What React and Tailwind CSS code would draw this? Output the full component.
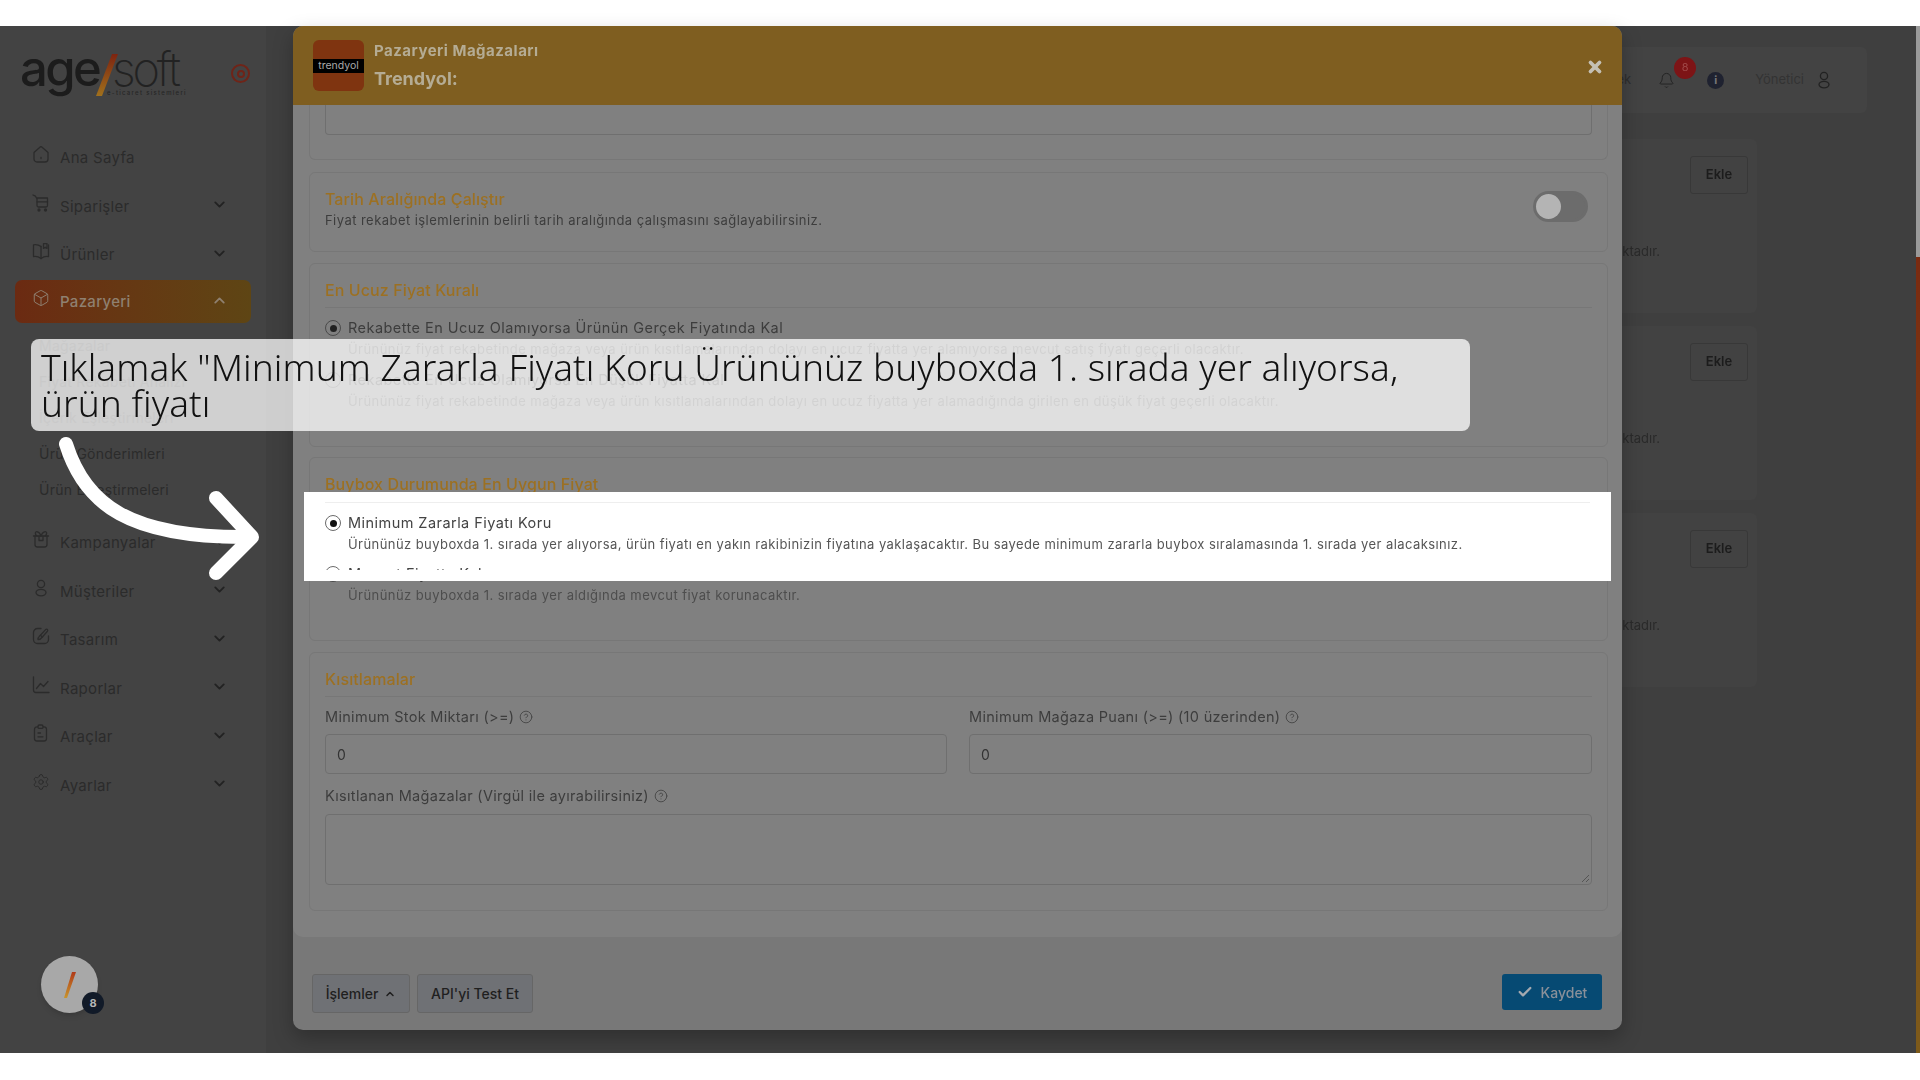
import React from 'react'
import { Box, Settings, ChevronDown, ChevronUp, Bell, X, Check, CircleHelp } from 'lucide-react'

const font = { fontFamily: 'Inter, "Noto Sans", sans-serif' }

function Glyph({ size = 18, strokeWidth = 1.3, className = '', children }) {
  return (
    <svg width={size} height={size} viewBox="0 0 18 18" fill="none" stroke="currentColor" strokeWidth={strokeWidth} strokeLinecap="round" strokeLinejoin="round" className={className}>
      {children}
    </svg>
  )
}

const HomeIcon = (p) => (
  <Glyph {...p}>
    <path d="M2 7.6 L7.6 2.4 a2 2 0 0 1 2.8 0 L16 7.6 V14 a3 3 0 0 1 -3 3 H5 a3 3 0 0 1 -3 -3 Z" />
    <path d="M9 12.5 V13.5" />
  </Glyph>
)
const CartIcon = (p) => (
  <Glyph {...p}>
    <path d="M1 1 L3.5 2.2 L5 5 V11.5 a1.5 1.5 0 0 0 1.5 1.5 H14 a1.5 1.5 0 0 0 1.5 -1.5 V4 H5" />
    <path d="M5.2 7.8 H15.5" />
    <circle cx="7" cy="16" r="1" fill="currentColor" />
    <circle cx="13.5" cy="16" r="1" fill="currentColor" />
  </Glyph>
)
const BookIcon = (p) => (
  <Glyph {...p}>
    <path d="M9 4.5 C7 3 4 2.4 1.5 2.8 V14.6 C4 14.2 7 15 9 16.6 C11 15 14 14.2 16.5 14.6 V2.8" />
    <path d="M9 4.5 V16.6" />
    <path d="M11.5 4 V1.6 H15 V6.4 L13.2 5.2 L11.5 6.4 Z" />
  </Glyph>
)
const GiftIcon = (p) => (
  <Glyph {...p}>
    <path d="M3 6 V14.5 a2.5 2.5 0 0 0 2.5 2.5 H12.5 a2.5 2.5 0 0 0 2.5 -2.5 V6" />
    <path d="M1.5 6 H16.5" />
    <path d="M7 6.5 V10.5 H11 V6.5" />
    <path d="M9 6 C7.5 1 3 .6 3.4 3.4 C3.5 4.5 4 5.4 5 6" />
    <path d="M9 6 C10.5 1 15 .6 14.6 3.4 C14.5 4.5 14 5.4 13 6" />
  </Glyph>
)
const PersonIcon = (p) => (
  <Glyph {...p}>
    <circle cx="9" cy="5" r="3.6" />
    <ellipse cx="9" cy="13.6" rx="5" ry="3.2" />
  </Glyph>
)
const DesignIcon = (p) => (
  <Glyph {...p}>
    <path d="M9 1.5 H5.5 a4 4 0 0 0 -4 4 V12.5 a4 4 0 0 0 4 4 H12.5 a4 4 0 0 0 4 -4 V9" />
    <path d="M6 12.6 C5.6 10.6 7 9.6 8.4 8.2 L13.6 2.6 c1.4 -1.2 2.8 .2 1.8 1.7 L10.4 10 C9 11.8 7.6 12.9 6 12.6 Z" />
    <path d="M8.4 8.2 L10.4 10" />
  </Glyph>
)
const ChartIcon = (p) => (
  <Glyph {...p}>
    <path d="M1.5 .8 V14 a2.5 2.5 0 0 0 2.5 2.5 H17" />
    <path d="M4.5 12.5 L8.5 7.5 L11.5 10.5 L16 5.5" />
  </Glyph>
)
const ClipIcon = (p) => (
  <Glyph {...p}>
    <path d="M6 2.8 H5 a2.5 2.5 0 0 0 -2.5 2.5 V14.5 a2.5 2.5 0 0 0 2.5 2.5 H12 a2.5 2.5 0 0 0 2.5 -2.5 V5.3 a2.5 2.5 0 0 0 -2.5 -2.5 H11" />
    <rect x="6" y="1" width="5" height="3.4" rx="1.2" />
    <path d="M6 9 H8.5 M6 12.8 H11" />
  </Glyph>
)

const topItems = [
  { label: 'Ana Sayfa', icon: HomeIcon },
  { label: 'Siparişler', icon: CartIcon, more: true },
  { label: 'Ürünler', icon: BookIcon, more: true },
]
const subItems = ['Mağazalar', 'Fiyat Rekabeti Analizi', 'İçerik Eşleştirmeleri', 'Ürün Gönderimleri', 'Ürün Eşleştirmeleri']
const bottomItems = [
  { label: 'Kampanyalar', icon: GiftIcon, more: true },
  { label: 'Müşteriler', icon: PersonIcon, more: true },
  { label: 'Tasarım', icon: DesignIcon, more: true },
  { label: 'Raporlar', icon: ChartIcon, more: true },
  { label: 'Araçlar', icon: ClipIcon, more: true },
  { label: 'Ayarlar', icon: Settings, more: true },
]

function NavItem({ item }) {
  const Icon = item.icon
  return (
    <div className="flex h-[48.5px] items-center pl-[32px] pr-[38px] text-[15px] tracking-[0.3px] text-[#2b2b2b]">
      <Icon size={18} strokeWidth={1.3} className="mb-[8px] mr-[10px] shrink-0" />
      <span>{item.label}</span>
      {item.more && <ChevronDown size={17} strokeWidth={2.6} className="mb-[4px] ml-auto text-[#222]" />}
    </div>
  )
}

function Sidebar() {
  return (
    <aside className="flex h-full w-[266px] shrink-0 flex-col bg-[#434343]">
      <div className="flex h-[108px] shrink-0 items-start pl-[20px] pt-[17px]">
        <div className="relative flex h-[52px] w-[168px] items-center text-[#222]">
          <span className="w-[92px] shrink-0 text-[49px] font-medium leading-[52px] tracking-[-2.6px] text-[#1c1c1c]">age</span>
          <span className="text-[47px] font-extralight leading-[52px] tracking-[-3.2px]">soft</span>
          <svg width="26" height="44" viewBox="0 0 26 44" className="absolute left-[75px] top-[10px]">
            <defs>
              <linearGradient id="logoSlash" x1="0" y1="0" x2="0" y2="1">
                <stop offset="0" stopColor="#7d2410" />
                <stop offset="1" stopColor="#a0701c" />
              </linearGradient>
            </defs>
            <polygon points="17,1 23,1 7,43 1,43" fill="url(#logoSlash)" />
          </svg>
          <span className="absolute left-[87px] top-[45px] text-[6px] font-medium tracking-[1.3px] text-[#262626]">e-ticaret sistemleri</span>
        </div>
        <div className="ml-[43px] mt-[21px] flex h-[19px] w-[19px] shrink-0 items-center justify-center rounded-full border-2 border-[#6f2418]">
          <div className="h-[8px] w-[8px] rounded-full border-2 border-[#6f2418]" />
        </div>
      </div>
      {topItems.map((item) => <NavItem key={item.label} item={item} />)}
      <div className="h-[48.5px] px-[15px] pb-[5px]">
        <div className="flex h-[43px] w-[236px] items-center rounded-[7px] bg-gradient-to-r from-[#6b2a12] to-[#5e4514] pl-[17px] pr-[23px] pt-[2px] text-[15px] font-medium tracking-[0.3px] text-[#8f8070]">
          <Box size={18} strokeWidth={1.3} className="mb-[8px] mr-[10px] shrink-0" />
          <span>Pazaryeri</span>
          <ChevronUp size={17} strokeWidth={2.6} className="mb-[4px] ml-auto" />
        </div>
      </div>
      <div className="-mt-[1px] mb-[12px]">
        {subItems.map((s) => (
          <div key={s} className="flex h-9 items-center pl-[39px] text-[14px] tracking-[0.25px] text-[#2b2b2b]">{s}</div>
        ))}
      </div>
      {bottomItems.map((item) => <NavItem key={item.label} item={item} />)}
      <div className="ml-[41px] mt-[146px]">
        <div className="relative flex h-[57px] w-[57px] items-center justify-center rounded-full bg-[#a8a8a8] shadow-md">
          <svg width="14" height="26" viewBox="0 0 14 26">
            <defs>
              <linearGradient id="avatarSlash" x1="0" y1="0" x2="0" y2="1">
                <stop offset="0" stopColor="#b03a18" />
                <stop offset="1" stopColor="#c8942c" />
              </linearGradient>
            </defs>
            <polygon points="9,0 13,0 4,26 1,26" fill="url(#avatarSlash)" />
          </svg>
          <span className="absolute left-[41px] top-[36px] flex h-[22px] w-[22px] items-center justify-center rounded-full bg-[#111a28] text-[11px] font-bold text-[#b5b5b5]">8</span>
        </div>
      </div>
    </aside>
  )
}

function Behind() {
  return (
    <main className="min-w-0 flex-1 bg-[#3f3f3f]">
      <div className="ml-[27px] mr-[49px] mt-[21px] flex h-[66px] items-center justify-end rounded-[6px] bg-[#434343] pr-[34px] text-[13px] text-[#2e2e2e]">
        <span>Destek</span>
        <div className="relative ml-[27px]">
          <Bell size={17} strokeWidth={1.3} className="text-[#222]" />
          <span className="absolute left-[16px] top-[-15px] flex h-[22px] w-[22px] items-center justify-center rounded-full bg-[#7d1416] text-[11px] text-[#a04848]">8</span>
        </div>
        <div className="ml-[32px] flex h-[17px] w-[17px] items-center justify-center rounded-full bg-[#1f2230] text-[11px] font-bold text-[#777]">i</div>
        <span className="ml-[31px] text-[#333]">Yönetici</span>
        <PersonIcon size={18} className="ml-[11px] text-[#222]" />
      </div>
      <div className="ml-[27px] mr-[159px] mt-[26px] flex flex-col gap-[13px]">
        {[0, 1, 2].map((i) => (
          <div key={i} className="flex h-[174px] flex-col items-end rounded-[6px] bg-[#424242] pr-[9px] pt-[17px]">
            <button className="h-[38px] w-[58px] rounded-[3px] border border-[#383838] text-[13px] font-semibold text-[#1c1c1c]">Ekle</button>
            <p className="mr-[88px] mt-[48px] text-[13px] text-[#2a2a2a]">Mağaza entegrasyonu aktif olarak çalışmaktadır.</p>
          </div>
        ))}
      </div>
    </main>
  )
}

function Radio({ on, tone }) {
  return (
    <span className={`mr-[7px] flex h-[16px] w-[16px] shrink-0 items-center justify-center rounded-full border-[1.5px] ${tone.radio}`}>
      {on && <span className={`h-[7px] w-[7px] rounded-full ${tone.dot}`} />}
    </span>
  )
}

const dim = { radio: 'border-[#4a4a4a]', dot: 'bg-[#222]', label: 'text-[#3d3d3d]', desc: 'text-[#4d4d4d]' }
const lit = { radio: 'border-[#6a6a6a]', dot: 'bg-[#111]', label: 'text-[#444]', desc: 'text-[#555]' }

function Options({ items, tone, gap = 'mt-[11px]' }) {
  return (
    <div>
      {items.map((o, i) => (
        <div key={o.label} className={i ? gap : ''}>
          <div className={`flex h-[20px] items-center text-[14.5px] tracking-[0.45px] ${tone.label}`}>
            <Radio on={o.on} tone={tone} />
            <span>{o.label}</span>
          </div>
          <p className={`mt-[1px] h-[20px] pl-[23px] text-[13px] leading-[20px] tracking-[0.43px] ${tone.desc}`}>{o.desc}</p>
        </div>
      ))}
    </div>
  )
}

const cheapOptions = [
  { label: 'Rekabette En Ucuz Olamıyorsa Ürünün Gerçek Fiyatında Kal', on: true, desc: 'Ürününüz fiyat rekabetinde mağaza veya ürün kısıtlamalarından dolayı en ucuz fiyatta yer alamıyorsa mevcut satış fiyatı geçerli olacaktır.' },
  { label: 'Rekabette En Ucuz Olamıyorsa En Düşük Fiyatta Kal', desc: 'Ürününüz fiyat rekabetinde mağaza veya ürün kısıtlamalarından dolayı en ucuz fiyatta yer alamadığında girilen en düşük fiyat geçerli olacaktır.' },
]
const buyboxOptions = [
  { label: 'Minimum Zararla Fiyatı Koru', on: true, desc: 'Ürününüz buyboxda 1. sırada yer alıyorsa, ürün fiyatı en yakın rakibinizin fiyatına yaklaşacaktır. Bu sayede minimum zararla buybox sıralamasında 1. sırada yer alacaksınız.' },
  { label: 'Mevcut Fiyatta Kal', desc: 'Ürününüz buyboxda 1. sırada yer aldığında mevcut fiyat korunacaktır.' },
]

function Card({ title, children, className = '' }) {
  return (
    <section className={`rounded-[6px] border border-[#777] px-[15px] pt-[16px] ${className}`}>
      <h3 className="h-[20px] text-[16px] font-medium leading-[20px] tracking-[0.1px] text-[#9c7022]">{title}</h3>
      <div className="mb-[10px] mt-[7px] h-px bg-[#777]" />
      {children}
    </section>
  )
}

function Label({ text }) {
  return (
    <div className="flex h-[20px] items-center text-[14.5px] tracking-[0.3px] text-[#3d3d3d]">
      <span>{text}</span>
      <CircleHelp size={14} strokeWidth={1.5} className="ml-[5px] text-[#444]" />
    </div>
  )
}

function Modal() {
  return (
    <div className="absolute left-[293px] top-0 flex h-[1004px] w-[1329px] flex-col overflow-hidden rounded-[10px] bg-[#787878] shadow-[0_8px_20px_rgba(0,0,0,0.25)]">
      <header className="flex h-[79px] shrink-0 items-center bg-[#7f5e20] px-[20px]">
        <div className="flex h-[51px] w-[51px] shrink-0 items-center overflow-hidden rounded-[6px] bg-[#7f3410]">
          <div className="flex h-[14px] w-full items-center justify-center bg-black text-[10.5px] text-[#aaa]">trendyol</div>
        </div>
        <div className="ml-[10px] text-[#b5ac94]">
          <div className="text-[15px] font-bold leading-[20px] tracking-[0.5px]">Pazaryeri Mağazaları</div>
          <div className="mt-[7px] text-[18px] font-bold leading-[22px]">Trendyol:</div>
        </div>
        <X size={18} strokeWidth={5} className="ml-auto mr-[-2px] mt-[2px] text-[#c4c0b4]" />
      </header>

      <div className="flex h-[832px] shrink-0 flex-col overflow-hidden rounded-b-[10px] bg-[#808080] pl-[16px] pr-[14px]">
        <div className="h-[55px] shrink-0 rounded-b-[6px] border border-t-0 border-[#777] px-[15px]">
          <div className="h-[30px] rounded-b-[4px] border border-t-0 border-[#6f6f6f]" />
        </div>
        <section className="mt-[12px] flex h-[80px] shrink-0 items-center justify-between rounded-[6px] border border-[#777] pl-[15px] pr-[19px]">
          <div className="mb-[5px]">
            <h3 className="text-[16px] font-medium leading-[20px] tracking-[0.1px] text-[#9c7022]">Tarih Aralığında Çalıştır</h3>
            <p className="mt-[1px] text-[13px] leading-[20px] tracking-[0.45px] text-[#3d3d3d]">Fiyat rekabet işlemlerinin belirli tarih aralığında çalışmasını sağlayabilirsiniz.</p>
          </div>
          <div className="mb-[12px] flex h-[31px] w-[55px] items-center rounded-full border-[3px] border-[#6c6c6c] bg-[#6c6c6c]">
            <span className="h-[25px] w-[25px] rounded-full bg-[#b4b4b4]" />
          </div>
        </section>
        <Card title="En Ucuz Fiyat Kuralı" className="mt-[11px] h-[184px] shrink-0">
          <Options items={cheapOptions} tone={dim} />
        </Card>
        <Card title="Buybox Durumunda En Uygun Fiyat" className="mt-[10px] h-[184px] shrink-0">
          <Options items={buyboxOptions} tone={dim} />
        </Card>
        <Card title="Kısıtlamalar" className="mt-[11px] h-[259px] shrink-0">
          <div className="grid grid-cols-[622px_623px] gap-x-[22px]">
            <div>
              <Label text="Minimum Stok Miktarı (>=)" />
              <div className="mt-[7px] flex h-[40px] items-center rounded-[4px] border border-[#6f6f6f] px-[11px] text-[14px] text-[#333]">0</div>
            </div>
            <div>
              <Label text="Minimum Mağaza Puanı (>=) (10 üzerinden)" />
              <div className="mt-[7px] flex h-[40px] items-center rounded-[4px] border border-[#6f6f6f] px-[11px] text-[14px] text-[#333]">0</div>
            </div>
          </div>
          <div className="mt-[12px]"><Label text="Kısıtlanan Mağazalar (Virgül ile ayırabilirsiniz)" /></div>
          <div className="relative mt-[8px] h-[71px] rounded-[4px] border border-[#6f6f6f]">
            <svg width="9" height="9" viewBox="0 0 9 9" stroke="#555" className="absolute bottom-[1px] right-[1px]">
              <path d="M1 8 L8 1 M5 8 L8 5" />
            </svg>
          </div>
        </Card>
      </div>

      <footer className="flex flex-1 items-center gap-[7px] pl-[19px] pr-[20px] pt-[20px]">
        <button className="flex h-[39px] w-[98px] items-center justify-center rounded-[3px] border border-[#666] bg-[#6f7175] text-[14px] font-medium text-[#1f1f1f]">
          İşlemler
          <ChevronUp size={12} strokeWidth={3} className="ml-[6px]" />
        </button>
        <button className="h-[39px] w-[116px] rounded-[3px] border border-[#666] bg-[#6f7175] text-[14px] font-medium text-[#1f1f1f]">API'yi Test Et</button>
        <button className="mb-[3px] ml-auto flex h-[36px] w-[100px] items-center justify-center rounded-[3px] bg-[#064a73] text-[14px] font-medium text-[#8a9099]">
          <Check size={16} strokeWidth={3.5} className="mr-[8px] text-[#a4a9af]" />
          Kaydet
        </button>
      </footer>
    </div>
  )
}

export default function App() {
  return (
    <div className="relative h-[1080px] w-[1920px] overflow-hidden bg-white" style={font}>
      <div className="pt-[26px]">
        <div className="relative flex h-[1027px] blur-[0.4px]">
          <Sidebar />
          <Behind />
          <div className="w-[4px] shrink-0 bg-[#9a9a9a]">
            <div className="mt-[231px] h-[796px] bg-gradient-to-b from-[#7a2a10] to-[#7d5a1a]" />
          </div>
          <Modal />
        </div>
      </div>

      <div className="absolute left-[304px] top-[492px] h-[89px] w-[1307px] bg-white px-[21px]">
        <div className="h-[78px] overflow-hidden blur-[0.3px]">
          <div className="mb-[10px] mt-[10px] h-px bg-[#eee]" />
          <Options items={buyboxOptions} tone={lit} gap="mt-[10px]" />
        </div>
      </div>

      <div className="absolute left-[31px] top-[339px] h-[92px] w-[1439px] rounded-[8px] bg-white/75 px-[10px] pt-[10px] text-[37px] font-light leading-[36px] tracking-[0.05px] text-[#111]" style={{ fontFamily: '"Noto Sans", sans-serif' }}>
        Tıklamak "Minimum Zararla Fiyatı Koru Ürününüz buyboxda 1. sırada yer alıyorsa,<br />ürün fiyatı
      </div>

      <svg className="absolute left-0 top-0" width="1920" height="1080" viewBox="0 0 1920 1080" fill="none" stroke="#fff" strokeWidth="14" strokeLinecap="round" strokeLinejoin="round">
        <path d="M66 444 C 85 505 130 538 248 537" />
        <path d="M216 498 L252 537 L216 573" />
      </svg>
    </div>
  )
}
